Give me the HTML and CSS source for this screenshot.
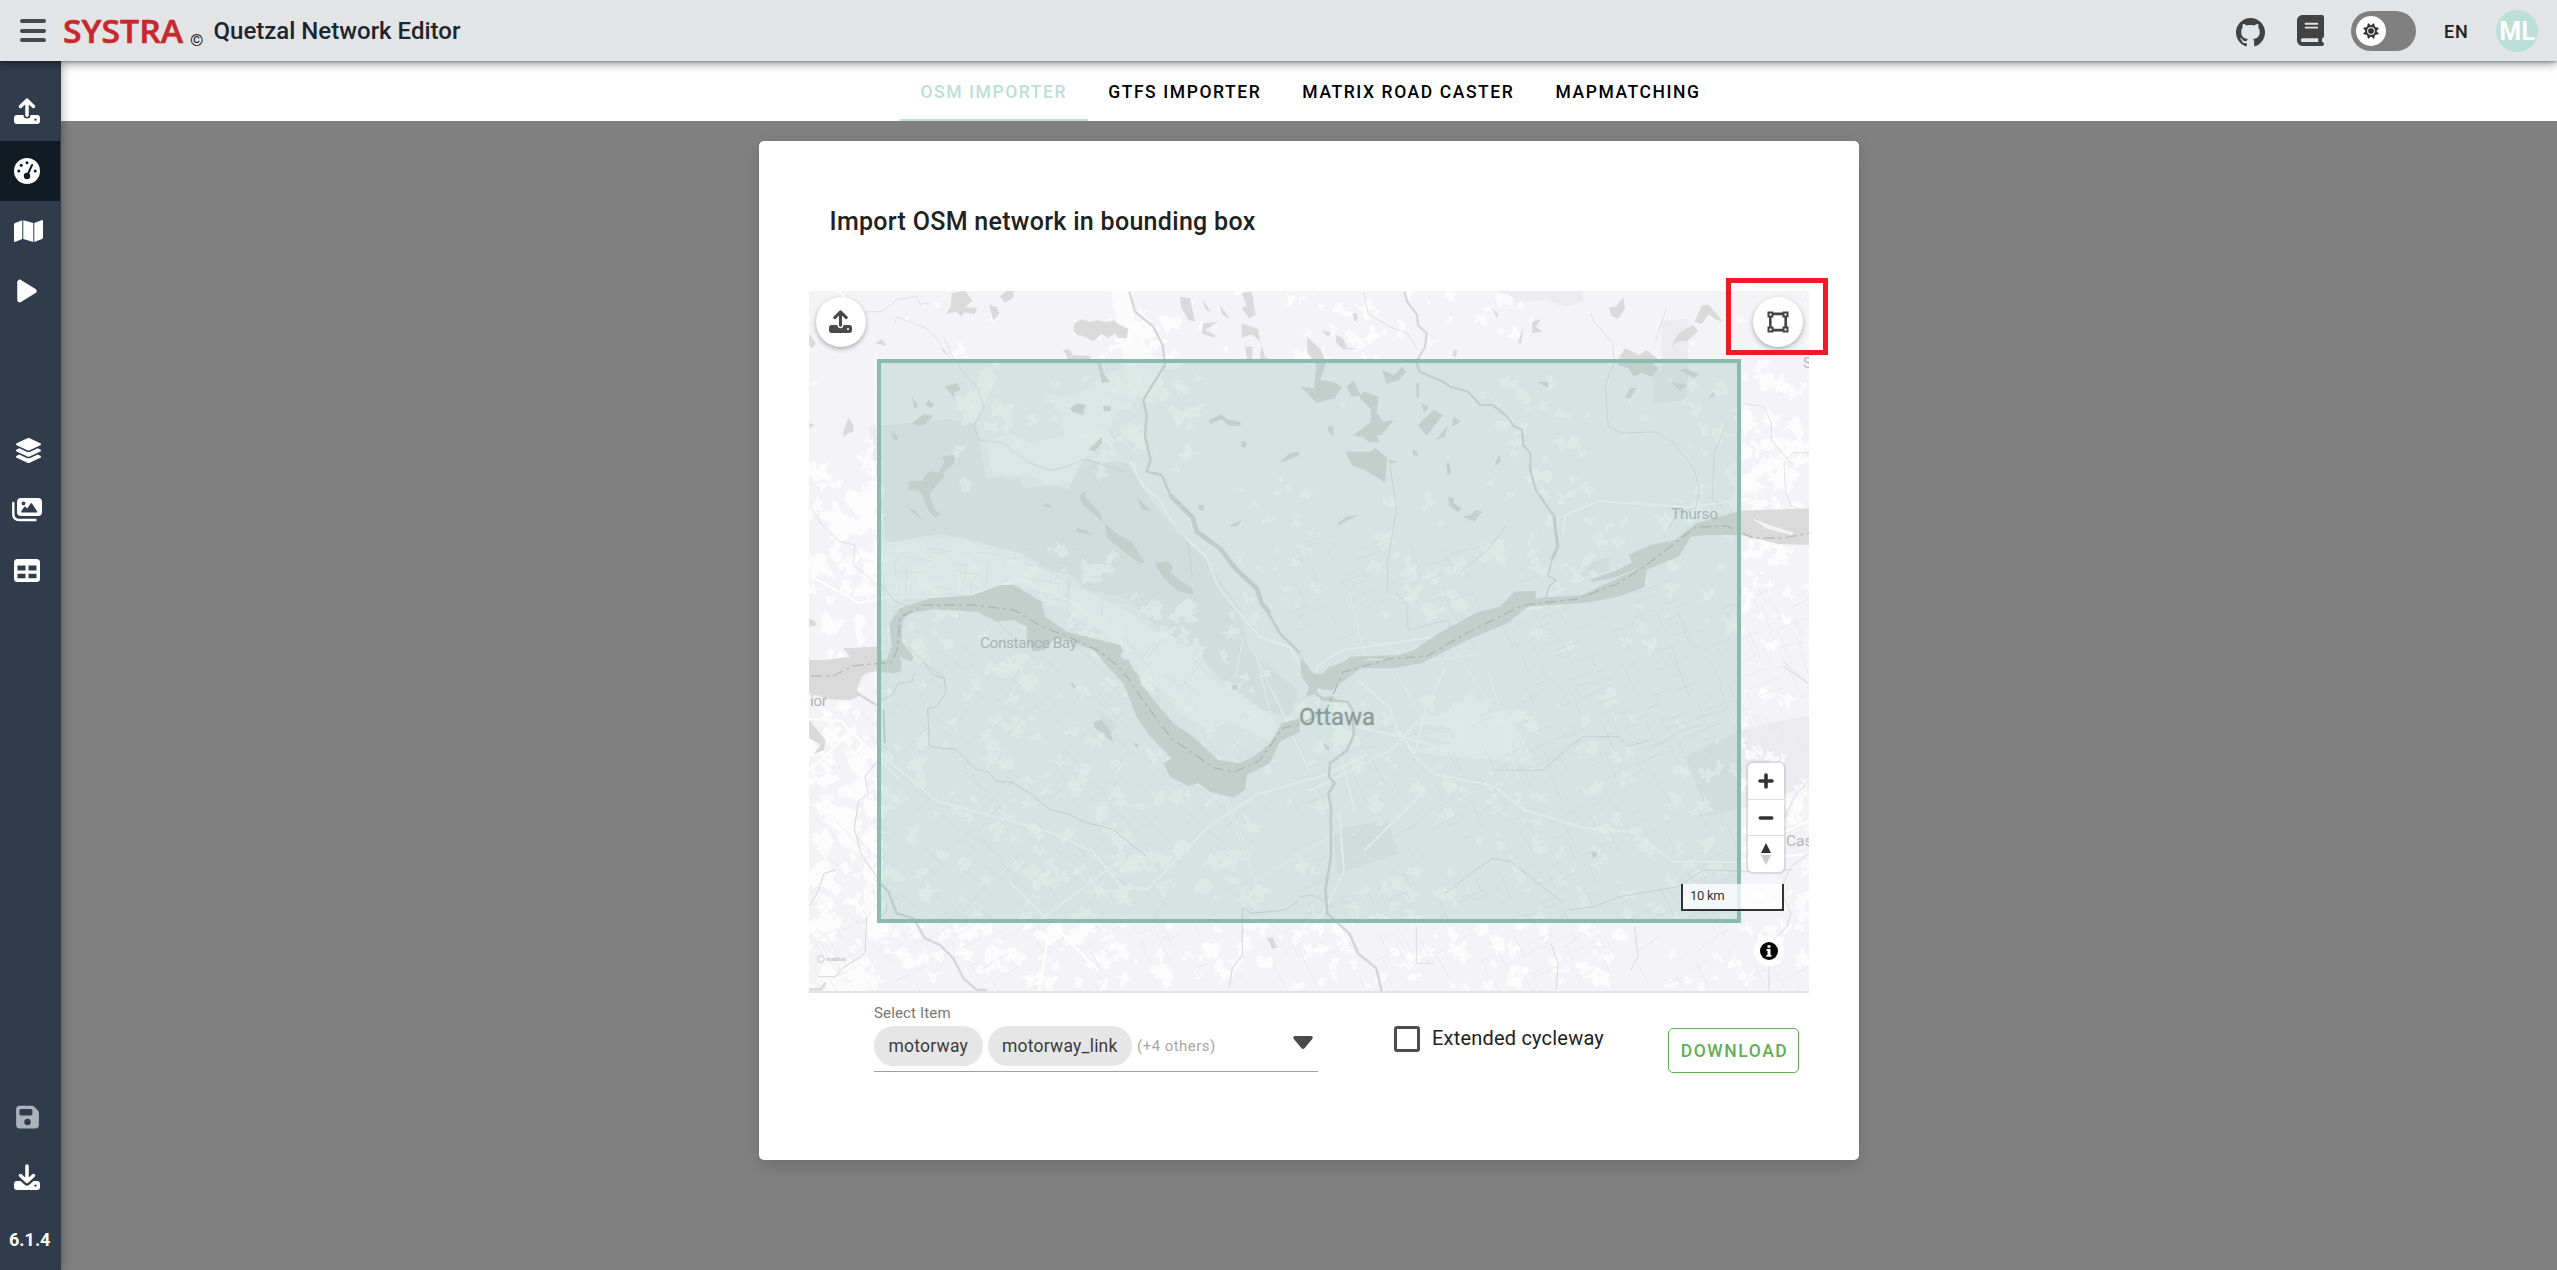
FILE: index.html
```html
<!DOCTYPE html>
<html lang="en">
<head>
<meta charset="utf-8">
<title>Quetzal Network Editor</title>
<link rel="stylesheet" href="styles.css">
</head>
<body>
<svg class="defs" width="0" height="0">
  <symbol id="i-upload" viewBox="0 0 26 26">
    <path fill="currentColor" fill-rule="evenodd" d="M3 17h6.5a3.5 3.5 0 0 0 7 0H23a3 3 0 0 1 3 3v3a3 3 0 0 1-3 3H3a3 3 0 0 1-3-3v-3a3 3 0 0 1 3-3zm18.5 3.4a1.2 1.2 0 1 0 0 2.4 1.2 1.2 0 0 0 0-2.4z"/>
    <path fill="none" stroke="currentColor" stroke-width="3.5" stroke-linecap="round" stroke-linejoin="round" d="M13 17.2V2.2M6.5 8.5L13 2.2l6.5 6.300"/>
  </symbol>
  <symbol id="i-download" viewBox="0 0 26 26">
    <path fill="currentColor" fill-rule="evenodd" d="M3 17h3.500l4.200 3.700q2.300 2 4.600 0L19.500 17H23a3 3 0 0 1 3 3v3a3 3 0 0 1-3 3H3a3 3 0 0 1-3-3v-3a3 3 0 0 1 3-3zm18.500 3.400a1.200 1.200 0 1 0 0 2.400 1.200 1.200 0 0 0 0-2.400z"/>
    <path fill="none" stroke="currentColor" stroke-width="3.500" stroke-linecap="round" stroke-linejoin="round" d="M13 2v15M6.500 11.500L13 17.500l6.500-6"/>
  </symbol>
</svg>

<header class="topbar">
  <button class="menu"><i></i><i></i><i></i></button>
  <svg class="logo" width="121" height="26" viewBox="0 0 121 26"><text x="0" y="25" textLength="120" lengthAdjust="spacingAndGlyphs">SYSTRA</text></svg>
  <span class="copy">©</span>
  <h1 class="app-name">Quetzal Network Editor</h1>
  <div class="tools">
    <svg class="github" viewBox="2 2 20 20" width="29" height="29"><path fill="currentColor" d="M12,2A10,10 0 0,0 2,12C2,16.42 4.87,20.17 8.84,21.5C9.34,21.58 9.5,21.27 9.5,21C9.5,20.77 9.5,20.14 9.5,19.31C6.73,19.91 6.14,17.97 6.14,17.97C5.68,16.81 5.03,16.5 5.03,16.5C4.12,15.88 5.1,15.9 5.1,15.9C6.1,15.97 6.63,16.93 6.63,16.93C7.5,18.45 8.97,18 9.54,17.76C9.63,17.11 9.89,16.67 10.17,16.42C7.95,16.17 5.62,15.31 5.62,11.5C5.62,10.39 6,9.5 6.65,8.79C6.55,8.54 6.2,7.5 6.75,6.15C6.75,6.15 7.59,5.88 9.5,7.17C10.29,6.95 11.15,6.84 12,6.84C12.85,6.84 13.71,6.95 14.5,7.17C16.41,5.88 17.25,6.15 17.25,6.15C17.8,7.5 17.45,8.54 17.35,8.79C18,9.5 18.38,10.39 18.38,11.5C18.38,15.32 16.04,16.16 13.81,16.41C14.17,16.72 14.5,17.33 14.5,18.26C14.5,19.6 14.5,20.68 14.5,21C14.5,21.27 14.66,21.59 15.17,21.5C19.14,20.16 22,16.42 22,12A10,10 0 0,0 12,2Z"/></svg>
    <svg class="book" viewBox="0 0 448 512" width="27" height="31"><path fill="currentColor" d="M96 0C43 0 0 43 0 96V416c0 53 43 96 96 96H384h32c17.700 0 32-14.300 32-32s-14.300-32-32-32V384c17.700 0 32-14.300 32-32V32c0-17.700-14.300-32-32-32H384 96zm0 384H352v64H96c-17.700 0-32-14.300-32-32s14.300-32 32-32zm32-240c0-8.800 7.200-16 16-16H336c8.800 0 16 7.200 16 16s-7.200 16-16 16H144c-8.800 0-16-7.200-16-16zm16 48H336c8.800 0 16 7.200 16 16s-7.200 16-16 16H144c-8.800 0-16-7.200-16-16s7.200-16 16-16z"/></svg>
    <div class="switch"><span class="knob">
      <svg width="16" height="16" viewBox="-8 -8 16 16"><path fill="#333" d="M0-5.500L3-8 4-4 8-3 5.500 0 8 3 4 4 3 8 0 5.500-3 8-4 4-8 3-5.500 0-8-3-4-4-3-8z"/><circle r="3.400" fill="#333" stroke="#ddd" stroke-width="1.200"/></svg>
    </span></div>
    <span class="lang">EN</span>
    <span class="avatar">ML</span>
  </div>
</header>

<div class="shell">
  <nav class="rail">
    <a class="rail-item"><svg width="26" height="26"><use href="#i-upload"/></svg></a>
    <a class="rail-item active"><svg width="26" height="26" viewBox="0 0 26 26"><circle cx="13" cy="13" r="13" fill="#fff"/><g fill="#111b24"><circle cx="13" cy="4.800" r="1.500"/><circle cx="7.200" cy="7.200" r="1.500"/><circle cx="4.800" cy="13" r="1.500"/><circle cx="21.200" cy="13" r="1.500"/><circle cx="13" cy="18" r="3.200"/></g><path d="M13.500 17L18 7" stroke="#111b24" stroke-width="2" stroke-linecap="round"/></svg></a>
    <a class="rail-item wide"><svg width="29" height="22" viewBox="0 0 29 22"><path fill="#fff" d="M0 4.500Q0 3.500 1 3L8.300.200V19L1.500 21.700Q0 22.200 0 21zM9.300.200L19.300 3v19L9.300 19zM20.300 3L27.500.200Q29-.2 29 1v16.500q0 1-1 1.400L20.300 22z"/></svg></a>
    <a class="rail-item"><svg width="20" height="26" viewBox="0 0 384 512"><path fill="#fff" d="M73 39c-14.800-9.100-33.400-9.400-48.500-.9S0 62.600 0 80V432c0 17.400 9.400 33.400 24.500 41.900s33.700 8.100 48.500-.9L361 297c14.300-8.700 23-24.200 23-41s-8.700-32.200-23-41L73 39z"/></svg></a>
    <a class="rail-item wide layers"><svg width="29" height="25" viewBox="0 0 576 512"><path fill="#fff" d="M264.500 5.200c14.900-6.900 32.100-6.900 47 0l218.600 101c8.500 3.900 13.900 12.400 13.900 21.800s-5.400 17.900-13.900 21.800l-218.600 101c-14.900 6.900-32.100 6.900-47 0L45.900 149.800C37.400 145.800 32 137.300 32 128s5.400-17.900 13.900-21.800L264.500 5.200zM476.900 209.600l53.200 24.600c8.500 3.900 13.900 12.400 13.900 21.800s-5.400 17.900-13.900 21.800l-218.600 101c-14.900 6.900-32.100 6.900-47 0L45.900 277.800C37.400 273.800 32 265.300 32 256s5.400-17.900 13.900-21.800l53.200-24.600 152 70.200c23.400 10.800 50.400 10.800 73.800 0l152-70.200zm-152 198.200l152-70.200 53.200 24.600c8.500 3.900 13.900 12.400 13.900 21.800s-5.400 17.900-13.900 21.800l-218.600 101c-14.900 6.900-32.100 6.900-47 0L45.900 405.800C37.400 401.800 32 393.300 32 384s5.400-17.900 13.900-21.800l53.200-24.600 152 70.200c23.400 10.800 50.400 10.800 73.800 0z"/></svg></a>
    <a class="rail-item"><svg width="30" height="24" viewBox="0 0 30 24"><path fill="#fff" fill-rule="evenodd" d="M9 0h17a4 4 0 0 1 4 4v10a4 4 0 0 1-4 4H9a4 4 0 0 1-4-4V4a4 4 0 0 1 4-4zm2.500 3.500a1.900 1.900 0 1 0 0 3.800 1.900 1.900 0 0 0 0-3.800zM10 14.500h14.500q1.200-.2.400-1.400L20 5.500q-.7-.8-1.400 0l-3.400 5-1.600-1.800q-.7-.6-1.300 0L9.400 13q-.6 1.200.6 1.500z"/><path fill="none" stroke="#fff" stroke-width="2.400" stroke-linecap="round" d="M1.300 5v11q0 6 6 6H23.500"/></svg></a>
    <a class="rail-item"><svg width="26" height="23" viewBox="0 0 26 23"><path fill="#fff" fill-rule="evenodd" d="M3.500 0h19A3.500 3.500 0 0 1 26 3.500v16a3.500 3.500 0 0 1-3.500 3.500h-19A3.500 3.500 0 0 1 0 19.500v-16A3.500 3.500 0 0 1 3.500 0zM3.500 6.500v5h8v-5zm11 0v5h8v-5zm-11 8.200v4.500h8v-4.500zm11 0v4.500h8v-4.500z"/></svg></a>
    <a class="rail-item save"><svg width="23" height="26" viewBox="0 0 448 512"><path fill="#acb2b9" d="M64 32C28.700 32 0 60.700 0 96V416c0 35.300 28.700 64 64 64H384c35.300 0 64-28.700 64-64V173.300c0-17-6.700-33.300-18.700-45.300L352 50.700C340 38.700 323.700 32 306.700 32H64zm0 96c0-17.700 14.300-32 32-32H288c17.700 0 32 14.300 32 32v64c0 17.700-14.300 32-32 32H96c-17.700 0-32-14.300-32-32V128zM224 288a64 64 0 1 1 0 128 64 64 0 1 1 0-128z"/></svg></a>
    <a class="rail-item"><svg width="26" height="26"><use href="#i-download"/></svg></a>
    <span class="version">6.1.4</span>
  </nav>

  <main class="content">
    <div class="tabs">
      <a class="tab current">OSM IMPORTER</a>
      <a class="tab">GTFS IMPORTER</a>
      <a class="tab">MATRIX ROAD CASTER</a>
      <a class="tab">MAPMATCHING</a>
    </div>

    <section class="card">
      <h2 class="card-title">Import OSM network in bounding box</h2>
      <div class="map">
        <svg class="map-canvas" width="1000" height="700" viewBox="0 0 1000 700">
          <rect width="1000" height="700" fill="#f4f4f7"/>
          <!-- parks -->
          <g fill="#ececf0">
            <path d="M60 136L140 128 168 134 172 160 177 188 211 183 214 198 262 191 276 168 317 172 325 183 345 214 365 237 400 272 430 316 440 360 490 400 480 428 452 418 408 384 380 352 352 340 318 308 260 295 215 263 150 246 78 252z"/>
            <path d="M690 0h84v10l-18 6-20-7-42 4zM852 30l27-2v50l-26 8zM844 80l35 2-2 27-32 3z"/>
            <path d="M876 466l55-26 40-10 29-5v70l-60 20-40 10zM524 540l55-12 10 35-60 20z"/>
            <path d="M770 274l30-8v14l-28 6zM290 420l20 15-12 10z"/>
          </g>
          <g id="patches" fill="#fdfdfd" opacity=".85"></g>
          <!-- large open areas -->
          <g fill="#fdfdfd">
            <path opacity=".6" d="M72 252L132 243 160 250 212 262 222 275 262 284 278 300 322 322 350 345 388 360 410 392 440 410 480 440 460 450 420 430 400 440 370 420 342 390 310 358 268 318 240 314 214 292 170 300 110 306 78 316z"/>
            <path opacity=".8" d="M612 432l32-14 20-20 6 14 14-6-6 16 20-4 14 26 16 32-30-6-50-4-45-6 40-8-30-8 42-4z"/>
            <path d="M170 80l12-4 6 10-10 20-10 22-12 6-2-12 12-14z"/>
            <path d="M178 150l24-8 20 10 34-8-8-24-14-20 20 6 24-8 16-14 22-8 10-16 8 30-8 20-20 14-12 30-22 18-12 26-22-4-20-12-16 8-22-12z" opacity=".6"/>
            <path d="M302 0l22 0 0 30 14 26 16 24-8 36-26-16-6-34z" opacity=".7"/>
          </g>
          <g id="grid" fill="none" stroke="#e8e8ec" stroke-width=".7"></g>
          <!-- roads -->
          <g fill="none" stroke="#fff" stroke-width="2">
            <path d="M321 170l14 26 16 13 18 32 28 24 12 30 22 28 20 23 30 10 16 30"/>
            <path d="M68 460l60 50 110 30 45 20 30 36 26 2 60-62 50-33 70-20 40-20"/>
            <path d="M510 400l-2-25 26-16 140-20 40-20 110-20"/>
            <path d="M754 244l2-20 34-14 90 6 60-8"/>
            <path d="M590 440l15 25 20 18 60 12 30 24 60 18 50 4 40 30 60 0 70-8"/>
            <path d="M640 460l-30-10-60-14-30-30M550 390l30 26 10 26 16 20 10-44 20-40"/>
            <path d="M0 428l32 2 60 60M0 480l40-38M30 0L40 10M200 590l90 90M240 640l-10 60M230 630l80-60"/>
            <path d="M500 500l80-40 30-30M530 460l16 60M505 640l30-60-5-60M555 560l60-60"/>
            <path d="M940 190l30-20 30-2M930 560l70-30M0 284l50 28 32-6 70 0 60-18 50 22 60 50"/>
          </g>
          <g fill="none" stroke="#fff" stroke-width="1">
            <path d="M448 368l20 80M464 400l36 80M440 350l60 130M412 490l30 80M390 440l60 160M540 300l20 80M575 360l40 70M680 380l30 110M560 350l50 20 60-6M510 420l40 10M420 340l14 8-8 40M430 600l100-60M460 420l-60 60M690 500l30-60M640 350l60 90"/>
          </g>
          <!-- lakes and rivers -->
          <g transform="translate(-9 -11) scale(.33333)" fill="#dadada">
            <path d="M455 40l40-8 22 30-22 20 38 2-10 18-30-5-10 12-15-14-30 8 15-25zM600 50l20-18 22 0-2 20-25 18zM568 75l22 5 8 20-18 22zM825 130l20-12 25 8 20-5 30 5 22-5 18 15 25 10-5 28-25 0-10-15-20 15-20-12-25 22-30-15-20-5-10-15zM790 210l18-2 12 18 55 2-10 14-60-2zM1140 50l30 5 15 70-20-5-22-40zM1205 55l28 40-15-5zM1260 75l30 42-25-15zM1325 40l30-5 12 70-20 10-22-30 15-10zM1210 130l45-5-40 25 30 15 0 8-40-12zM1325 130l50 18 5 35-25-20-30 10zM1335 200l22 0 0 35-15 8zM1385 195l10 35 20 10-35-4z"/>
            <path d="M890 250l15 0 5 30 20 25-25 5-5-30zM432 320l40-10 10 20-20 8 2 18-20-25zM335 430l35-28 30 5-25 25-20 6zM375 375l10-15 18 12-10 12zM335 350l20 30-12 5zM810 385l22-15 25 5-8 30-30-8zM910 378h22v15h-20zM865 510l40-40 2 20-22 24zM1228 420l35-18 20 15 38 10 0 10-35 0-20-20-35 15zM1440 545l30-25 28-5-2 12-50 20zM425 530l38-5 0 25-35 30 5 10-45 50 15 50 18 10-15 13-20-20-20-50-10-10-32-5 5-25 35 0 25-30 25 5 20-30zM325 685l20 5 22 30-18-12zM272 455l22 12 0 14-12-2zM838 645l20-12 0 20 45 50 5 22-30-25-30-25zM915 730l40 35 40 20 38 60-12 8-50-40-50-38zM1065 850l40-5 15 15-8 18 25 22 40 25 2 20-45-12-40-35-20-30zM1010 650l45 45-30-8zM1290 735l35-15-12 18-22 2zM1325 482l16 5-5 16-12-2zM1195 675h16v15h-14zM725 678l18-8 15 15zM828 745l30 5 20 15-45-8zM27 430l18 5-18 8zM130 455l15-42 15 22 0 20-15 5-15 10zM420 195l35 40-25-20zM225 190l20-12 15 20zM27 160l20 30-10 15-10-10z"/>
            <path d="M245 1175L275 1100 268 1030 300 985 390 955 520 945 600 915 640 915 725 965 735 1010 800 1055 860 1070 960 1095 970 1115 960 1125 1010 1180 1025 1210 975 1210 880 1110 770 1070 735 1110 700 1115 680 1080 680 1040 640 1020 590 1025 530 995 400 988 330 1000 308 1020 305 1085 340 1130 335 1145 300 1130 305 1170 280 1180z"/>
            <path d="M27 1150L90 1138 150 1130 130 1105 230 1100 245 1110 245 1170 200 1180 170 1200 27 1200zM27 1015l20 10 0 12-20 2z"/>
          </g>
          <g transform="translate(-9 -11) scale(.33333)" fill="none" stroke="#d6d6d6" stroke-linejoin="round">
            <path stroke-width="7" d="M988 35L1005 95 1060 140 1088 195 1095 255 1060 310 1030 360 1040 405 1035 470 1052 540 1040 575 1085 585 1115 655"/>
            <path stroke-width="14" d="M1110 645L1180 715 1190 755 1260 805 1310 870 1370 925 1385 970 1410 1000"/>
            <path stroke-width="8" d="M1400 990L1440 1060 1500 1120"/>
            <path stroke-width="2" d="M430 170l30 65 40 55 32 30 20 60-30 55 15 45 70 8 80 60 60 22 40-5 70-28 60 20 60 18M245 915l40 50 40 15M325 1100l60 60 50 35M580 1010l60 65M1115 730l50 60 12 100M200 95h45l45-35 60-12 10 25 28-5M285 130l5-20 90 35 40 40M30 680l40 60 50 45 45 10-5 60 50 40 20 15"/>
          </g>
          <g transform="translate(491 -21) scale(.35714 .33333)" fill="#dadada">
            <path d="M148 130h12v20l-8 5zM60 180l28 8-10 12zM100 195l20 10 12 28 45 5-55 0-20-20zM20 200l40 40 12 40-15 50 35 5 25 15-20 35-40 10-10 5-35-40-12-10 40 5 5-70-25-40zM130 350l20-20 20 45-25 5zM165 380l15-15 40 15-5 50 20 25 28-5-35 45-15 0 10 22-30 0-15-15-30-5 35-30 15-10 0-40zM230 300l35 15 20-25 12 15-20 25-35 12zM325 340h8v40l-6 8zM340 400l20 10-12 20zM330 465l45-45 25 15-15 20-30 42zM430 440l20 15-25 15zM380 510l35-45-10 35zM78 470l15-3 2 35-15-15zM127 545h70l12-12 35 30-6 75-35-25-30-15-25-10zM245 570l30 5-22 5zM315 540l12 2 5 15-15 0zM547 575l12-20 3 20-14 12zM410 580l8 0 5 30-10 5zM415 680l15 5 0 15 22 15-10 12-25-20zM455 740l25-5 10-15 20 5-22 30zM105 760l25-20 35-5-30 15-25 15zM540 115l15 18-5 10zM610 220l15-50-5 50zM650 190l0-35 25-8-15 25 20 12zM865 110l20 0 20-28 5 35-20 30-18-10zM1105 155l20-50 20 0 40 50-25-8-15-15-20 30zM1040 230l20-40 40-25 15 18-30 30-25 0zM895 260l15-25 40 20 20-15 30 25-10 20 15 10-20 25-30-12-20 12-15-25-30-10zM910 385l15-32 18 0-18 32zM1060 300l20-5 38 18-15 10zM1035 335l50 10-20 18zM1140 385l20-20 0 15zM665 335h30l0 20zM430 240l10 0-3 22-10-5z"/>
            <path d="M0 1150L30 1210 80 1215 140 1160 280 1155 320 1140 380 1095 500 1025 560 1010 600 965 660 962 660 985 790 975 940 900 920 855 980 825 1050 810 1110 760 1235 722 1425 715 1425 825 1340 822 1235 795 1140 795 1095 800 1060 860 970 900 965 950 900 978 820 995 780 1000 640 1010 580 1060 470 1110 340 1180 260 1195 170 1195 90 1260 60 1260 20 1215z"/>
            <path d="M810 930l80-30 60-35-15 35-60 25-55 10z"/>
            <path fill="#f4f4f7" d="M145 1180l50-14 85 2-90 14zM1265 745l60 24 60 20-10 6-70-20z"/>
          </g>
          <g transform="translate(491 -21) scale(.35714 .33333)" fill="none" stroke="#d6d6d6" stroke-linejoin="round">
            <path stroke-width="6" d="M292 64L300 95 328 135 330 165 355 190 350 230 325 275 335 305 400 335 420 350 470 365 505 405 540 405 580 440 600 470 622 480 625 525 645 550 645 600 660 660 712 740"/>
            <path stroke-width="9" d="M712 740L715 780 722 830 705 870"/>
            <path stroke-width="4" d="M705 870l-10 48 22 12-20 20-8 35"/>
            <path stroke-width="2" d="M815 130l5 20 55 70 5 60-25 60 8 130 40 20 90-5 50 30 60 80 15 60-10 60-50 10-40 80M1195 460l-35 90-5 140 30 20M1425 548l-45 0-25 30 5 90 15 40 35 15M575 770l-50 70-80 70M180 70l10 60 60 40 50 20 30 50M1025 115l-30 100M270 970l28 30 5 80 110-30 15 40M250 570l20 150-25 160 0 90M1240 400l60 10 20 50 0 50 55 70M1350 1170l70 70"/>
          </g>
          <g transform="translate(-9 369) scale(.33333)" fill="#dadada">
            <path d="M27 0H245V20L195 25 170 90 185 105 150 120 90 118 27 100zM27 180l50 60-5 30-30 12 20-28-35-20z"/>
            <path d="M905 0L985 0 1020 70 1120 190 1180 230 1255 300 1320 310 1360 290 1410 250 1445 190 1500 175 1500 215 1440 245 1410 310 1340 345 1335 390 1300 413 1230 395 1195 370 1165 378 1110 350 1090 310 1115 295 1050 230 1010 170 970 70z"/>
            <path d="M243 0h60v35h-60zM880 185l25-5 25 30 10 40-30-30-25-15zM1295 75h18v15h-15zM815 65l12 15-2 5-12-8zM998 248l18 5-5 12zM1402 835l15-3 15 30-15 5z"/>
          </g>
          <g transform="translate(-9 369) scale(.33333)" fill="none" stroke="#d6d6d6" stroke-linejoin="round">
            <path stroke-width="3" d="M370 5l30 40 33 10 5 45-30 40-25 5 5 115 80 8 60 60 40 10 20 25 50 5 50 30 60 50 60 15 50 25 80 20 100 80M345 40l-10 25-40 5-20 35-30 15M230 305l-35 45 10 50-30 25-12 80 20 75 50 75M27 740l25-40 20-60 35-10M200 770l-5 110-60 40-30 30-50 0M245 770l15-20 0-20M1327 745l30 15 100-10 40-30M1327 745l0 140-30 40-10 60"/>
            <path stroke-width="7" d="M230 660l35 35 25 65 50 15 35 60 45 20 40 40 30 60 40 35 30 0M27 988l35 0 15-20M250 150l5 100M170 100l60 35"/>
          </g>
          <g transform="translate(491 369) scale(.3635 .3333)" fill="#dadada">
            <path d="M0 0l20 15 20 35 15 0 25-30 40-15 230-10-60 22-180 10-50 35-15 35 20 15 25-5 10 20-40-5-20-20-25 10 10-30-20-30zM65 250l15 10 3 12-12-5zM800 575l15 0 3 12-12 8z"/>
          </g>
          <g transform="translate(491 369) scale(.3635 .3333)" fill="none" stroke="#d6d6d6" stroke-linejoin="round">
            <path stroke-width="7" d="M80 120L130 125 145 150 148 225 130 270 82 310 80 350 95 370 78 400 85 440 85 590 70 690 75 760 135 820 160 880 210 925 225 995"/>
            <path stroke-width="2.500" d="M0 710l30-5 35 15M740 750l70-10 70-30 160-30 70-50 125 5M400 700l70-60 60-45 50 10 70 60 70 60M540 330h130l60-60 50-40 100 0 20 30 60-20M1400 360l-40 50-25 60M1330 20l70 50M1400 580l-50 40-20 50 0 40 20 50-10 40-30 30M1290 920v75M1235 630h120M320 800v110h50M690 850l20 60-5 80M920 800l10 90-20 40"/>
          </g>
          <!-- administrative boundary along the river -->
          <path fill="none" stroke="#b9b9b9" stroke-width="1.300" stroke-dasharray="11 4 3 4" d="M2 385H24L44 375 82 371 88 360 91 326 116 314 165 314 205 319 232 335 262 347 290 360 310 376 318 386 338 415 362 447 405 477 425 481 450 470 474 437 492 433 517 420 534 381 580 368 618 365 660 341 714 314 768 308 810 292 836 275 887 236 918 235 944 247 975 247 1000 242"/>
          <g class="place" fill="#b5b5b8">
            <text x="171" y="357" textLength="97">Constance Bay</text>
            <text x="862" y="228" textLength="47">Thurso</text>
            <text x="1" y="415" textLength="17">ior</text>
            <text x="977" y="555">Cas</text>
            <text x="994" y="77">S</text>
          </g>
          <text class="city" x="490" y="434" textLength="76">Ottawa</text>
          <g fill="none" stroke="#cfcfd2"><circle cx="12" cy="668" r="3.300"/></g>
          <text class="mapbox" x="17" y="670" textLength="20">mapbox</text>
        </svg>
        <div class="bbox"></div>
        <button class="round upload"><svg width="23" height="23"><use href="#i-upload"/></svg></button>
        <button class="round polygon"><svg width="22" height="22" viewBox="0 0 22 22" fill="none" stroke="#444"><path stroke-width="2.600" d="M5 2.900h12M5 19.100h12M3.300 5v12M18.700 5v12"/><g stroke-width="2" fill="#fff"><rect x="1.500" y="1.500" width="4" height="4"/><rect x="16.500" y="1.500" width="4" height="4"/><rect x="1.500" y="16.500" width="4" height="4"/><rect x="16.500" y="16.500" width="4" height="4"/></g></svg></button>
        <div class="highlight"></div>
        <div class="nav-ctrl">
          <span><svg width="16" height="16" viewBox="0 0 16 16"><path d="M8 2v12M2 8h12" stroke="#333" stroke-width="3.600" stroke-linecap="round"/></svg></span>
          <span><svg width="16" height="16" viewBox="0 0 16 16"><path d="M2.300 8h11.400" stroke="#333" stroke-width="3.600" stroke-linecap="round"/></svg></span>
          <span><svg width="10" height="22" viewBox="0 0 10 22"><path d="M5 0l5 10H0z" fill="#333"/><path d="M5 22l5-10H0z" fill="#ccc"/></svg></span>
        </div>
        <div class="scale">10 km</div>
        <div class="info"><svg width="18" height="18" viewBox="0 0 18 18"><circle cx="9" cy="9" r="9"/><path fill="#fff" d="M7.500 3.300h3v2.400h-3zM6.500 7h4v6h1v1.700h-5V13h1V8.700h-1z"/></svg></div>
      </div>

      <div class="form">
        <div class="select">
          <label class="select-label">Select Item</label>
          <div class="chips">
            <span class="chip">motorway</span>
            <span class="chip">motorway_link</span>
            <span class="more">(+4 others)</span>
            <svg class="caret" width="20" height="14" viewBox="0 0 20 14"><path fill="#4a4a4a" d="M2 0h16q3 .8 1 3.200l-7.500 9Q10 13.700 8.500 12.200L1 3.200Q-1 .8 2 0z"/></svg>
          </div>
        </div>
        <label class="check"><i class="box"></i>Extended cycleway</label>
        <button class="download">DOWNLOAD</button>
      </div>
    </section>
  </main>
</div>
<script src="map.js"></script>
</body>
</html>
```
FILE: styles.css
```css
* { box-sizing: border-box; }
body { margin: 0; height: 1270px; overflow: hidden; background: #808080; font-family: Roboto, sans-serif; color: #212121; }
button { border: 0; background: none; padding: 0; font: inherit; }
svg { display: block; }
.defs { position: absolute; }

.topbar { position: relative; z-index: 3; display: flex; align-items: center; height: 61px; padding: 0 19px 0 20px; background: #e3e4e6; box-shadow: 0 3px 9px rgba(0,0,0,.38), 0 1px 3px rgba(0,0,0,.25); }
.menu { display: flex; flex-direction: column; gap: 5.500px; width: 26px; margin-right: 17px; }
.menu i { height: 4px; border-radius: 2px; background: #444a48; }
.logo { overflow: visible; }
.logo text { font: 600 33px "Open Sans", sans-serif; fill: #c8282d; stroke: #c8282d; stroke-width: .6; }
.copy { width: 14px; margin: 19px 9.500px 0 6px; font-size: 17px; line-height: 20px; }
.app-name { margin: 0; font-size: 24px; font-weight: 500; line-height: 32px; color: #1d262f; white-space: nowrap; }
.tools { display: flex; align-items: center; margin-left: auto; color: #424242; }
.github { margin: 3px 32px 0 0; }
.book { margin-right: 27px; }
.switch { width: 65px; height: 40px; margin-right: 28px; padding: 5px; border-radius: 20px; background: #808080; }
.knob { display: flex; align-items: center; justify-content: center; width: 30px; height: 30px; border-radius: 50%; background: #fff; }
.lang { width: 24px; margin-right: 28px; padding-top: 2px; font-size: 18px; font-weight: 500; letter-spacing: .8px; color: #212121; }
.avatar { width: 42px; height: 42px; border-radius: 50%; background: #bce0d6; color: #fff; font-size: 25px; font-weight: 700; line-height: 43px; text-align: center; }

.shell { display: flex; height: 1209px; }
.rail { position: relative; z-index: 2; display: flex; flex-direction: column; width: 61px; padding-top: 20px; background: #303c4b; color: #fff; box-shadow: 1px 0 9px rgba(0,0,0,.3); }
.rail-item { display: flex; align-items: center; justify-content: center; flex: none; height: 60px; padding-right: 7px; }
.rail-item.wide { padding-right: 4px; }
.rail-item.active { background: #111b24; margin-right: 1px; padding-right: 6px; }
.layers { margin-top: 99px; }
.save { margin-top: auto; }
.version { height: 63px; padding-left: 9px; font-size: 18px; font-weight: 700; line-height: 66px; }

.content { flex: 1; display: flex; flex-direction: column; align-items: center; }
.tabs { display: flex; justify-content: center; align-self: stretch; height: 60px; background: #fff; padding-left: 3px; }
.tab { padding: 0 20.500px; border-bottom: 2px solid transparent; font-size: 17.500px; font-weight: 500; letter-spacing: 1.580px; line-height: 62px; color: #000; white-space: nowrap; }
.tab.current { color: #bce0d6; border-color: #bce0d6; }

.card { display: flex; flex-direction: column; width: 1100px; height: 1019px; margin-top: 20px; padding: 61px 50px 0; border-radius: 5px; background: #fff; box-shadow: 0 6px 16px rgba(0,0,0,.14); }
.card-title { margin: 0 0 49px 20.500px; font-size: 25px; font-weight: 500; letter-spacing: .3px; line-height: 40px; }
.map { position: relative; width: 1000px; height: 702px; border-bottom: 2px solid #e2e2e4; }
.place { font-family: Roboto, sans-serif; font-size: 15.500px; }
.city { font: 400 24px Roboto, sans-serif; fill: #949799; stroke: #949799; stroke-width: .4; }
.mapbox { font: 700 6px Roboto, sans-serif; fill: #c8c8cb; }
.bbox { position: absolute; left: 68px; top: 68px; width: 864px; height: 564px; border: 4px solid #8abbad; background: rgba(120,180,159,.25); background-clip: padding-box; }
.round { position: absolute; top: 6px; display: flex; align-items: center; justify-content: center; width: 50px; height: 50px; padding-bottom: 1px; border-radius: 50%; background: #fff; color: #4a4a4a; box-shadow: 0 2px 5px rgba(0,0,0,.3); }
.upload { left: 7px; padding-right: 1px; }
.polygon { left: 944px; }
.highlight { position: absolute; left: 917px; top: -13px; width: 102px; height: 77px; border: 5px solid #ed1c24; }
.nav-ctrl { position: absolute; left: 939px; top: 472px; width: 36px; height: 109px; border-radius: 5px; background: #fff; box-shadow: 0 0 0 2px rgba(0,0,0,.1); }
.nav-ctrl span { display: flex; align-items: center; justify-content: center; height: 36px; }
.nav-ctrl span + span { border-top: 1px solid #ddd; }
.scale { position: absolute; left: 872px; top: 593px; width: 103px; height: 27px; padding-left: 7px; border: 2px solid #333; border-top: 0; background: rgba(255,255,255,.75); color: #333; font-size: 13px; letter-spacing: -.3px; line-height: 23px; }
.info { position: absolute; left: 945px; top: 645px; display: flex; align-items: center; justify-content: center; width: 30px; height: 30px; border-radius: 50%; background: #fff; }

.form { display: flex; align-items: flex-start; padding-left: 65px; }
.select { width: 444px; padding-top: 10px; border-bottom: 1px solid #a0a0a0; }
.select-label { display: block; font-size: 15px; line-height: 20px; letter-spacing: .16px; color: #777; }
.chips { display: flex; align-items: center; height: 48px; padding-bottom: 2px; }
.chip { height: 40px; margin-right: 5px; padding: 0 14.500px; border-radius: 20px; background: #e6e6e6; color: #3c3c3c; font-size: 17.500px; line-height: 40px; letter-spacing: .22px; }
.more { font-size: 15px; letter-spacing: .45px; color: #a6a6a6; }
.caret { margin: -7px 5px 0 auto; }
.check { display: flex; align-items: center; margin: 30px 0 0 76px; font-size: 20px; line-height: 28px; letter-spacing: .2px; }
.box { width: 26px; height: 26px; margin: 3px 12px 0 0; border: 3px solid #4d4d4d; border-radius: 3px; }
.download { width: 131px; height: 45px; margin: 35px 10px 0 auto; padding-left: 2px; border: 1px solid #5cb050; border-radius: 5px; color: #5fae55; font-size: 17.500px; font-weight: 500; letter-spacing: 1.560px; }
```
FILE: map.js
```javascript
// Scatters the small field patches and the faint rural road grid over the base map.
let seed = 7;
const rnd = () => (seed = (seed * 16807) % 2147483647) / 2147483647;

// x, y, width, height, patch count, largest radius
const fields = [
  [0, 150, 68, 550, 95, 13], [68, 320, 400, 320, 210, 9], [0, 630, 1000, 66, 190, 8],
  [480, 400, 450, 230, 150, 8], [560, 200, 370, 160, 65, 9], [470, 0, 250, 70, 30, 8],
  [290, 20, 100, 160, 45, 9], [150, 60, 160, 140, 22, 9], [430, 180, 80, 150, 30, 7],
  [80, 255, 250, 60, 35, 10], [932, 70, 68, 200, 45, 11], [932, 280, 68, 400, 60, 7],
  [680, 90, 100, 120, 25, 8], [870, 90, 60, 130, 25, 7], [0, 0, 1000, 150, 50, 4]
];
let blobs = "";
for (const [x, y, w, h, n, r] of fields) {
  for (let i = 0; i < n; i++) {
    const cx = x + rnd() * w, cy = y + rnd() * h, size = r * (0.35 + rnd());
    const pts = [];
    for (let k = 0; k < 12; k++) {
      const a = k * 0.5236, d = size * (0.15 + rnd() * 1.15);
      pts.push((cx + Math.cos(a) * d).toFixed(1) + " " + (cy + Math.sin(a) * d).toFixed(1));
    }
    blobs += "M" + pts.join("L") + "z";
  }
}
const ns = "http://www.w3.org/2000/svg";
const add = (id, d) => {
  const p = document.createElementNS(ns, "path");
  p.setAttribute("d", d);
  document.getElementById(id).appendChild(p);
};
add("patches", blobs);

const rural = [
  [68, 330, 380, 300, 230, 0.7], [480, 420, 450, 210, 200, -0.45], [700, 300, 300, 160, 130, -0.4],
  [0, 400, 68, 290, 40, 0.7], [0, 635, 1000, 60, 130, -0.5], [932, 280, 68, 300, 50, -0.4],
  [480, 250, 250, 110, 60, -0.4], [80, 255, 240, 60, 60, 0.1]
];
let lines = "";
for (const [x, y, w, h, n, tilt] of rural) {
  for (let i = 0; i < n; i++) {
    const a = tilt + (rnd() > 0.5 ? Math.PI / 2 : 0) + (rnd() - 0.5) * 0.15, l = 8 + rnd() * 28;
    const px = x + rnd() * w, py = y + rnd() * h;
    lines += `M${px.toFixed(1)} ${py.toFixed(1)}l${(Math.cos(a) * l).toFixed(1)} ${(Math.sin(a) * l).toFixed(1)}`;
  }
}
add("grid", lines);
```
